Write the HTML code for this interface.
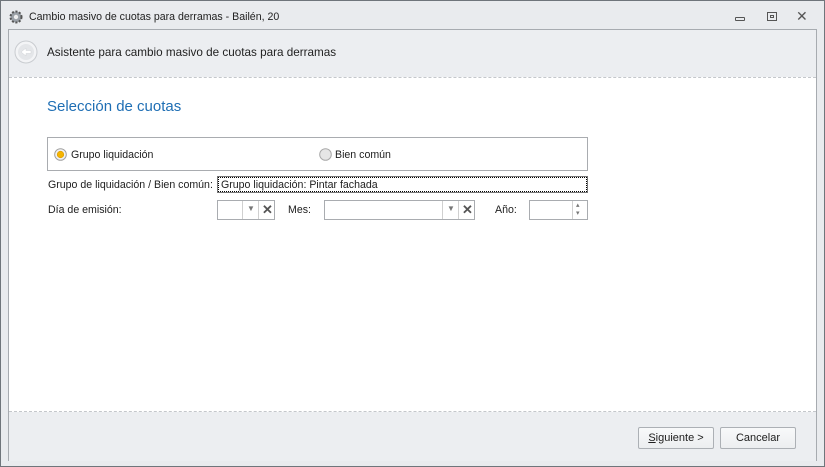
<!DOCTYPE html>
<html><head><meta charset="utf-8"><style>
*{margin:0;padding:0;box-sizing:border-box}
body{width:825px;height:467px;background:#e9ebee;font-family:"Liberation Sans",sans-serif;font-size:10.6px;color:#202020;position:relative;overflow:hidden}
.win{position:absolute;left:0;top:0;width:825px;height:467px;border:1px solid #6f757b;background:#e9ebee}
.abs{position:absolute}
.title{left:28px;top:10px;font-size:10.6px;color:#222}
.inner{left:7px;top:28px;width:809px;height:432px;border:1px solid #a7abb0;border-bottom:none;background:#eceef1}
.content{left:0;top:47px;width:807px;height:335px;background:#fff;border-top:1px dashed #c4c7cb;border-bottom:1px dashed #c4c7cb}
.btn{height:22px;border:1px solid #acb0b5;background:linear-gradient(#f8f9fa,#eceef0);border-radius:2px;text-align:center;line-height:20px;font-size:11px}
.box{border:1px solid #a9acb0;background:#fff;height:20px}
</style></head><body>
<div class="win">
<svg class="abs" style="left:7px;top:8px" width="16" height="16" viewBox="0 0 16 16"><circle cx="8" cy="8" r="5.5" fill="#9aa0a6" stroke="#555" stroke-width="2" stroke-dasharray="2 1.6"/><circle cx="8" cy="8" r="2.2" fill="#eee"/></svg>
<div class="abs title">Cambio masivo de cuotas para derramas - Bailén, 20</div>
<div class="abs" style="left:734px;top:16px;width:10px;height:4px;border:1px solid #555;border-radius:1px"></div>
<div class="abs" style="left:766px;top:11px;width:10px;height:9px;border:1px solid #555"><div style="margin:2px 2px;width:4px;height:3px;border:1px solid #555"></div></div>
<div class="abs" style="left:795px;top:7px;font-size:14px;color:#555">✕</div>
<div class="abs inner">
 <svg class="abs" style="left:5px;top:10px" width="24" height="24" viewBox="0 0 24 24"><circle cx="12" cy="12" r="11" fill="#f3f4f6" stroke="#c9ccd0"/><circle cx="12" cy="12" r="8" fill="#e4e6e9"/><path d="M7 12l5-4v2.5h5v3h-5V16z" fill="#fff" stroke="#cfd2d6" stroke-width=".5"/></svg>
 <div class="abs" style="left:38px;top:16px;font-size:11.7px;color:#222">Asistente para cambio masivo de cuotas para derramas</div>
 <div class="abs content">
  <div class="abs" style="left:38px;top:20px;font-size:15px;color:#1e6eb4">Selección de cuotas</div>
  <div class="abs" style="left:38px;top:59px;width:541px;height:34px;border:1px solid #a9acb0"></div>
  <svg class="abs" style="left:45px;top:70px" width="13" height="13"><circle cx="6.5" cy="6.5" r="5.8" fill="#f2f2f2" stroke="#a0a0a0"/><circle cx="6.5" cy="6.5" r="3.3" fill="#f5b400" stroke="#d99a00" stroke-width=".6"/></svg>
  <div class="abs" style="left:62px;top:71px">Grupo liquidación</div>
  <svg class="abs" style="left:310px;top:70px" width="13" height="13"><circle cx="6.5" cy="6.5" r="5.8" fill="#e6e6e6" stroke="#a8a8a8"/></svg>
  <div class="abs" style="left:326px;top:71px">Bien común</div>
  <div class="abs" style="left:39px;top:101px">Grupo de liquidación / Bien común:</div>
  <div class="abs" style="left:208px;top:98px;width:371px;height:17px;border:1px solid #777;outline:1px dotted #000;outline-offset:-2px;padding:2px 3px">Grupo liquidación: Pintar fachada</div>
  <div class="abs" style="left:39px;top:126px">Día de emisión:</div>
  <div class="abs box" style="left:208px;top:122px;width:58px"><div class="abs" style="left:24px;top:0;width:1px;height:18px;background:#d0d0d0"></div><div class="abs" style="left:29px;top:3px;font-size:8px;color:#777">▼</div><div class="abs" style="left:40px;top:0;width:1px;height:18px;background:#d0d0d0"></div><div class="abs" style="left:44px;top:1px;font-size:13px;font-weight:bold;color:#555">✕</div></div>
  <div class="abs" style="left:279px;top:126px">Mes:</div>
  <div class="abs box" style="left:315px;top:122px;width:151px"><div class="abs" style="left:117px;top:0;width:1px;height:18px;background:#d0d0d0"></div><div class="abs" style="left:122px;top:3px;font-size:8px;color:#777">▼</div><div class="abs" style="left:133px;top:0;width:1px;height:18px;background:#d0d0d0"></div><div class="abs" style="left:137px;top:1px;font-size:13px;font-weight:bold;color:#555">✕</div></div>
  <div class="abs" style="left:486px;top:126px">Año:</div>
  <div class="abs box" style="left:520px;top:122px;width:59px"><div class="abs" style="left:42px;top:0;width:1px;height:18px;background:#d0d0d0"></div><div class="abs" style="left:46px;top:1px;font-size:7px;color:#777;line-height:8px">▴<br>▾</div></div>
 </div>
 <div class="abs btn" style="left:629px;top:397px;width:76px"><u>S</u>iguiente &gt;</div>
 <div class="abs btn" style="left:711px;top:397px;width:76px">Cancelar</div>
</div>
</div>
</body></html>
